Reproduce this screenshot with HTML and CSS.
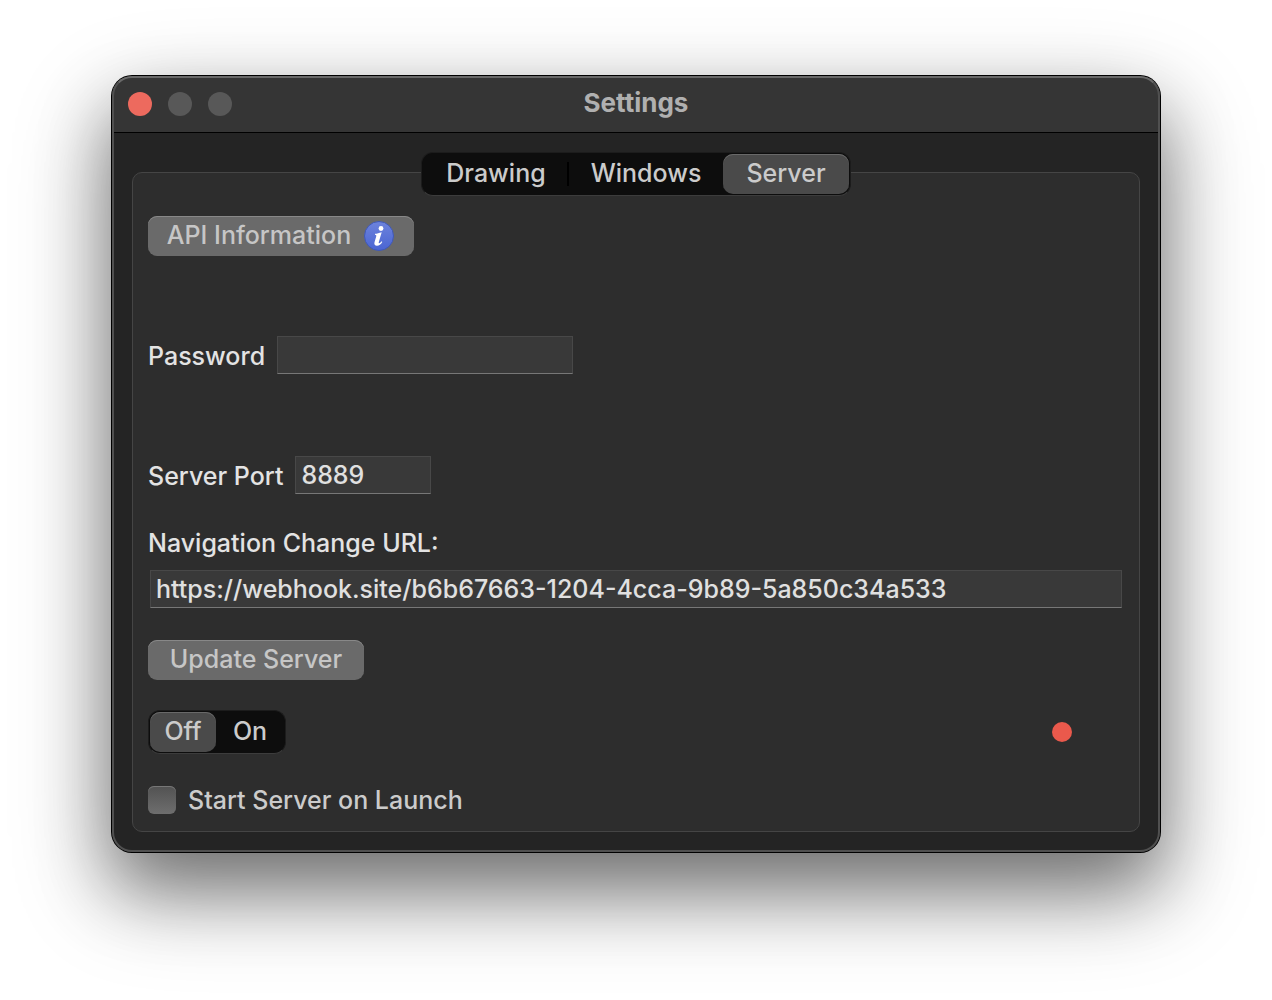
FILE: index.html
```html
<!DOCTYPE html>
<html lang="en">

<head>
    <meta charset="UTF-8" />
    <meta name="viewport" content="width=device-width, initial-scale=1.0" />
    <title>Settings</title>
    <link rel="stylesheet" href="styles.css">
</head>

<body>

    <main class="window">
        <header class="titlebar">
            <div class="lights">
                <button class="light light-close" type="button" aria-label="Close"></button>
                <button class="light" type="button" aria-label="Minimize" disabled></button>
                <button class="light" type="button" aria-label="Zoom" disabled></button>
            </div>
            <h1>Settings</h1>
        </header>

        <div class="content">
            <nav class="segmented tabs" role="tablist">
                <button type="button" role="tab" aria-selected="false">Drawing</button>
                <button type="button" role="tab" aria-selected="false">Windows</button>
                <button class="selected" type="button" role="tab" aria-selected="true">Server</button>
            </nav>

            <form class="panel" role="tabpanel">
                <button class="btn btn-api" type="button">
                    API Information
                    <svg class="info-icon" viewBox="0 0 32 32" aria-hidden="true">
                        <defs>
                            <linearGradient id="info-fill" x1="0" y1="0" x2="0" y2="1">
                                <stop offset="0" stop-color="#6d83dc" />
                                <stop offset="1" stop-color="#4a65d3" />
                            </linearGradient>
                        </defs>
                        <circle cx="16" cy="16" r="14.5" fill="url(#info-fill)" stroke="#4058b4" />
                        <circle cx="18" cy="8.5" r="2.4" fill="#fff" />
                        <path d="M12 13.8c2.2-.2 4-.7 6.7-1.6l-2.8 9.6c-.3 1-.2 1.500.3 1.500.7 0 1.400-.8 2.300-2l.8.6c-1.500 2.500-3.200 3.800-5.300 3.800-2.200 0-3-1.400-2.500-3.500l1.700-5.700c.3-1.100.1-1.600-1.200-1.700z" fill="#fff" />
                    </svg>
                </button>

                <div class="row row-password">
                    <label for="password">Password</label>
                    <input type="password" id="password" name="password">
                </div>

                <div class="row row-port">
                    <label for="port">Server Port</label>
                    <input type="text" id="port" name="port" value="8889">
                </div>

                <div class="url-field">
                    <label for="url">Navigation Change URL:</label>
                    <input type="text" id="url" name="url" value="https://webhook.site/b6b67663-1204-4cca-9b89-5a850c34a533">
                </div>

                <button class="btn btn-update" type="button">Update Server</button>

                <div class="status-row">
                    <div class="segmented toggle">
                        <button class="selected" type="button" aria-pressed="true">Off</button>
                        <button type="button" aria-pressed="false">On</button>
                    </div>
                    <span class="status-dot" role="img" aria-label="Server stopped"></span>
                </div>

                <label class="check">
                    <input type="checkbox" name="launch">
                    Start Server on Launch
                </label>
            </form>
        </div>
    </main>

</body>

</html>
```

FILE: styles.css
```css
* {
    margin: 0;
    padding: 0;
    box-sizing: border-box;
}

body {
    font-family: Inter, "Liberation Sans", sans-serif;
    font-size: 25px;
    font-weight: 500;
    line-height: 30px;
    color: #e3e3e3;
    background: white;
    min-height: 100vh;
    padding: 76px 112px;
}

button,
input {
    font: inherit;
    color: inherit;
    border: none;
}

.window {
    min-width: 700px;
    border-radius: 20px;
    background: #242424;
    box-shadow: 0 0 0 1px #000, 0 36px 70px rgba(0, 0, 0, 0.38), 0 36px 100px rgba(0, 0, 0, 0.32);
    position: relative;
}

/* light rim drawn over the title bar and the body */
.window::after {
    content: "";
    position: absolute;
    inset: 0;
    border: 2px solid #505050;
    border-top-color: #696969;
    border-radius: 20px;
    pointer-events: none;
}

.titlebar {
    display: grid;
    grid-template-columns: 1fr auto 1fr;
    align-items: center;
    height: 57px;
    padding: 0 16px;
    background: #353535;
    border-bottom: 1px solid #000;
    border-radius: 20px 20px 0 0;
}

.titlebar h1 {
    font-size: 26px;
    font-weight: 700;
    color: #b0b0b0;
    padding-bottom: 2px;
}

.lights {
    display: flex;
    gap: 16px;
}

.light {
    width: 24px;
    height: 24px;
    border-radius: 50%;
    background: #585858;
}

.light-close {
    background: #ed6a5e;
}

.content {
    display: flex;
    flex-direction: column;
    padding: 19px 20px 20px;
}

.segmented {
    display: flex;
    height: 44px;
    padding: 1px;
    border-radius: 12px;
    background: #0d0d0d;
    border: 1px solid #1c1c1c;
    border-bottom-color: #3c3c3c;
    color: #cbcbcb;
}

.segmented button {
    background: none;
    border-radius: 10px;
    padding-bottom: 2px;
}

.segmented .selected {
    background: #4a4a4a;
    box-shadow: inset 0 1px 0 #696969;
}

.tabs {
    align-self: center;
    z-index: 1;
    margin-bottom: -24px;
}

.tabs button {
    width: 154px;
}

.tabs button:first-child {
    width: 146px;
    border-radius: 0;
    background: linear-gradient(#000, #000) right center / 2px 24px no-repeat;
}

.tabs .selected {
    width: 126px;
}

.panel {
    display: flex;
    flex-direction: column;
    align-items: flex-start;
    padding: 43px 15px 17px;
    background: #2d2d2d;
    border: 1px solid #454545;
    border-radius: 10px;
}

.btn {
    display: flex;
    align-items: center;
    justify-content: center;
    height: 40px;
    padding-bottom: 2px;
    border-radius: 9px;
    background: #6a6a6a;
    box-shadow: inset 0 1px 0 #888;
    color: #c6c6c6;
}

.btn-api {
    width: 266px;
    gap: 12px;
}

.info-icon {
    width: 32px;
    height: 32px;
    margin-top: 2px;
}

.btn-update {
    width: 216px;
    margin-top: 32px;
}

.row {
    display: flex;
    align-items: center;
    gap: 12px;
}

.row label {
    padding-top: 2px;
}

.row-password {
    margin-top: 80px;
}

.row-port {
    margin-top: 82px;
}

.panel input[type="text"],
.panel input[type="password"] {
    height: 38px;
    padding: 0 5px;
    background: #393939;
    border: 1px solid #484848;
    border-bottom-color: #777;
    color: #e0e0e0;
}

.row-password input {
    width: 296px;
}

.row-port input {
    width: 136px;
}

.url-field {
    display: flex;
    flex-direction: column;
    align-self: stretch;
    gap: 12px;
    margin-top: 34px;
}

.url-field input {
    margin: 0 2px;
}

.status-row {
    display: flex;
    align-self: stretch;
    align-items: center;
    justify-content: space-between;
    margin-top: 30px;
    padding-right: 52px;
}

.toggle button {
    width: 68px;
}

.toggle .selected {
    width: 66px;
}

.status-dot {
    width: 20px;
    height: 20px;
    border-radius: 50%;
    background: #ea594c;
}

.check {
    display: flex;
    align-items: center;
    gap: 12px;
    height: 28px;
    margin-top: 32px;
    color: #cbcbcb;
}

.check input {
    appearance: none;
    width: 28px;
    height: 28px;
    border-radius: 6px;
    background: linear-gradient(#525252, #6e6e6e);
    box-shadow: inset 0 1px 0 #777;
}

.check input:checked {
    background: #3a76e0;
}
```
